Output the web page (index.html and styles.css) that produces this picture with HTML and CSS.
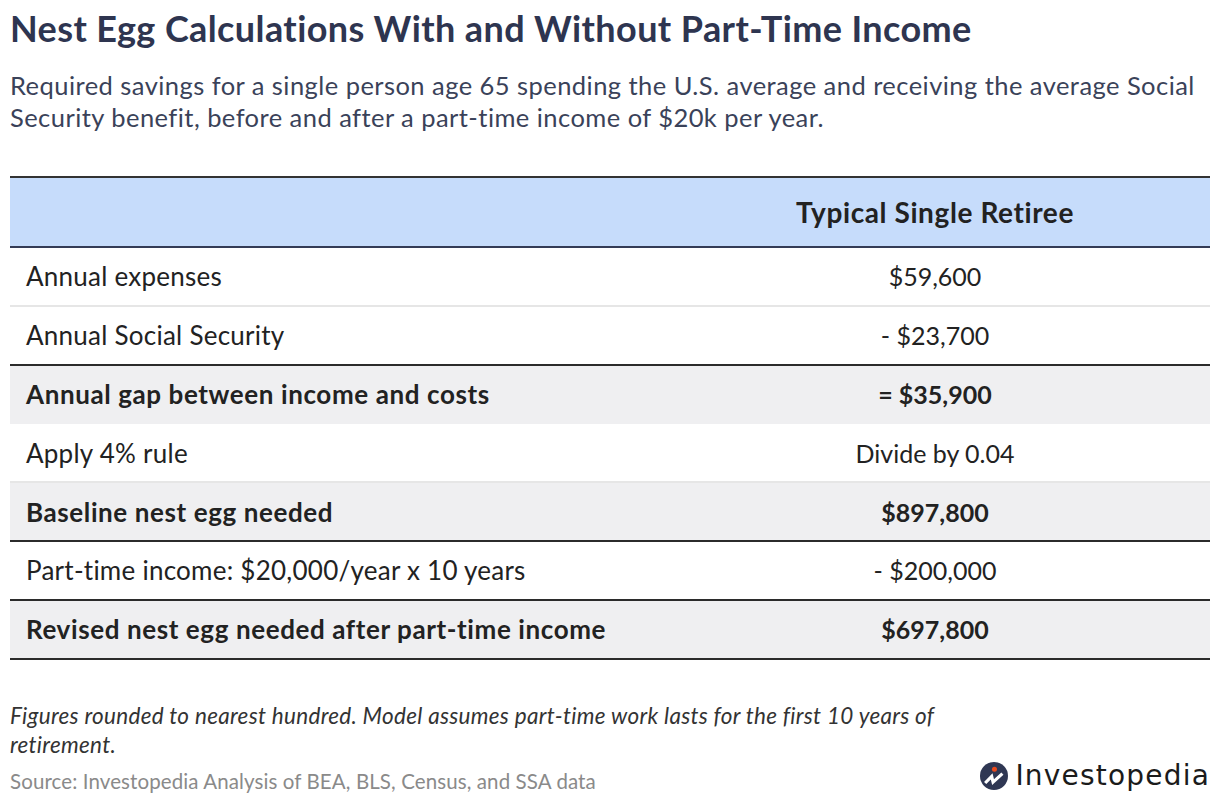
FILE: index.html
```html
<!DOCTYPE html>
<html lang="en">
<head>
<meta charset="utf-8">
<title>Nest Egg Calculations</title>
<link rel="stylesheet" href="styles.css">
</head>
<body>
<div class="page">
  <h1 class="title">Nest Egg Calculations With and Without Part-Time Income</h1>
  <p class="subtitle">Required savings for a single person age 65 spending the U.S. average and receiving the average Social Security benefit, before and after a part-time income of $20k per year.</p>

  <table class="calc">
    <thead>
      <tr>
        <th class="label-col"></th>
        <th class="value-col">Typical Single Retiree</th>
      </tr>
    </thead>
    <tbody>
      <tr class="light">
        <td class="label-col">Annual expenses</td>
        <td class="value-col">$59,600</td>
      </tr>
      <tr class="dark">
        <td class="label-col">Annual Social Security</td>
        <td class="value-col">- $23,700</td>
      </tr>
      <tr class="total light">
        <td class="label-col">Annual gap between income and costs</td>
        <td class="value-col">= $35,900</td>
      </tr>
      <tr class="light">
        <td class="label-col">Apply 4% rule</td>
        <td class="value-col">Divide by 0.04</td>
      </tr>
      <tr class="total dark">
        <td class="label-col">Baseline nest egg needed</td>
        <td class="value-col">$897,800</td>
      </tr>
      <tr class="dark">
        <td class="label-col">Part-time income: $20,000/year x 10 years</td>
        <td class="value-col">- $200,000</td>
      </tr>
      <tr class="total dark">
        <td class="label-col">Revised nest egg needed after part-time income</td>
        <td class="value-col">$697,800</td>
      </tr>
    </tbody>
  </table>

  <p class="note">Figures rounded to nearest hundred. Model assumes part-time work lasts for the first 10 years of retirement.</p>

  <div class="footer">
    <span class="source">Source: Investopedia Analysis of BEA, BLS, Census, and SSA data</span>
    <span class="logo">
      <svg class="logo-mark" width="28" height="28" viewBox="0 0 30 30" aria-hidden="true">
        <circle cx="15" cy="15" r="15" fill="#2f3753"/>
        <polyline points="5.5,22.5 12.5,15.5 14,21.5 24,12.5" fill="none" stroke="#ffffff" stroke-width="3.4" stroke-linejoin="miter" stroke-linecap="butt"/>
        <circle cx="15.5" cy="7.8" r="2.7" fill="#ea4a1c"/>
      </svg>
      <span class="logo-text">Investopedia</span>
    </span>
  </div>
</div>
</body>
</html>
```

FILE: styles.css
```css
* {
  box-sizing: border-box;
}

html, body {
  margin: 0;
  padding: 0;
  background: #ffffff;
}

body {
  font-family: "Lato", "Liberation Sans", sans-serif;
  color: #222222;
}

.page {
  width: 1220px;
  height: 806px;
  padding: 8px 10px 0 10px;
  overflow: hidden;
}

.title {
  margin: 0;
  font-size: 36px;
  line-height: 40px;
  font-weight: 700;
  letter-spacing: 0.4px;
  color: #2e3550;
}

.subtitle {
  margin: 21px 0 0 0;
  font-size: 25.5px;
  line-height: 32px;
  font-weight: 400;
  letter-spacing: 0.45px;
  color: #3a4259;
}

.calc {
  width: 100%;
  margin-top: 43px;
  border-collapse: collapse;
  border-top: 2px solid #333333;
  font-size: 26px;
  color: #222222;
}

.calc th,
.calc td {
  padding: 0;
}

.calc thead tr {
  background: #c6dcfb;
  border-bottom: 2px solid #343c56;
}

.calc th {
  height: 70px;
  font-weight: 700;
  font-size: 28px;
  letter-spacing: 0.6px;
}

.label-col {
  width: 650px;
  text-align: left;
  padding-left: 16px !important;
  letter-spacing: 0.25px;
}

.value-col {
  text-align: center;
  font-size: 25px;
}

.calc td {
  height: 58.8px;
}

.calc tbody tr.light {
  border-bottom: 2px solid #e6e6e6;
}

.calc tbody tr.dark {
  border-bottom: 2px solid #2b2b2b;
}

.calc tbody tr.total {
  background: #efeff1;
  font-weight: 700;
}

.calc tbody tr.total .label-col {
  letter-spacing: 0.6px;
}

.calc tbody tr.total.light {
  border-bottom-color: #efeff1;
}

.note {
  margin: 41px 0 0 0;
  width: 960px;
  font-size: 22.5px;
  line-height: 29px;
  font-style: italic;
  letter-spacing: 0.3px;
  color: #333333;
}

.footer {
  display: flex;
  justify-content: space-between;
  align-items: flex-end;
  margin-top: 0;
}

.source {
  font-size: 20.5px;
  line-height: 28px;
  letter-spacing: 0.1px;
  color: #8a8a8a;
}

.logo {
  display: flex;
  align-items: center;
  gap: 7px;
  margin-bottom: 2px;
}

.logo-text {
  font-family: "DejaVu Sans", "Liberation Sans", sans-serif;
  font-size: 28px;
  line-height: 34px;
  font-weight: 400;
  letter-spacing: 1.2px;
  color: #1b1b1b;
}
```
